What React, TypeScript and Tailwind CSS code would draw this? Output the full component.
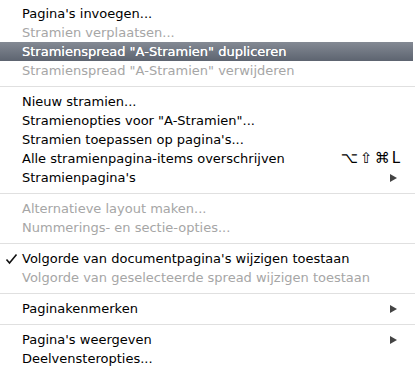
import React from 'react';

type Item = {
  label: string;
  disabled?: boolean;
  active?: boolean;
  checked?: boolean;
  shortcut?: string;
  submenu?: boolean;
};

const groups: Item[][] = [
  [
    { label: "Pagina's invoegen..." },
    { label: 'Stramien verplaatsen...', disabled: true },
    { label: 'Stramienspread "A-Stramien" dupliceren', active: true },
    { label: 'Stramienspread "A-Stramien" verwijderen', disabled: true },
  ],
  [
    { label: 'Nieuw stramien...' },
    { label: 'Stramienopties voor "A-Stramien"...' },
    { label: "Stramien toepassen op pagina's..." },
    { label: 'Alle stramienpagina-items overschrijven', shortcut: '⌥⇧⌘L' },
    { label: "Stramienpagina's", submenu: true },
  ],
  [
    { label: 'Alternatieve layout maken...', disabled: true },
    { label: 'Nummerings- en sectie-opties...', disabled: true },
  ],
  [
    { label: "Volgorde van documentpagina's wijzigen toestaan", checked: true },
    { label: 'Volgorde van geselecteerde spread wijzigen toestaan', disabled: true },
  ],
  [{ label: 'Paginakenmerken', submenu: true }],
  [
    { label: "Pagina's weergeven", submenu: true },
    { label: 'Deelvensteropties...' },
  ],
];

const Arrow = () => (
  <svg width="9" height="10" viewBox="0 0 9 10" className="shrink-0">
    <path d="M1 1 L8 5 L1 9 Z" fill="#444" />
  </svg>
);

const Check = () => (
  <svg width="13" height="12" viewBox="0 0 13 12">
    <path d="M1.5 6.5 L4.5 10 L11.5 1.5" fill="none" stroke="#111" strokeWidth="1.6" />
  </svg>
);

const Row: React.FC<{ item: Item }> = ({ item }) => {
  const color = item.active ? 'text-white' : item.disabled ? 'text-[#a6a6a6]' : 'text-black';
  return (
    <div
      className={`h-[19px] flex items-center mr-[2px] ${color} ${
        item.active ? 'bg-gradient-to-b from-[#848a94] to-[#5d6470]' : ''
      }`}
    >
      <div className="w-[22px] pl-[5px] flex items-center shrink-0">{item.checked && <Check />}</div>
      <span className={`flex-1 whitespace-nowrap ${item.active ? '[text-shadow:0_0_0.4px_#fff]' : ''}`}>
        {item.label}
      </span>
      {item.shortcut && <span className="mr-[11px] text-[15px] tracking-[2px]">{item.shortcut}</span>}
      {item.submenu && (
        <span className="mr-[15px] flex items-center">
          <Arrow />
        </span>
      )}
    </div>
  );
};

export default function App() {
  return (
    <div
      className="w-[415px] h-[372px] bg-white pt-[4px] text-[13px] leading-[19px] overflow-hidden"
      style={{ fontFamily: '"DejaVu Sans", sans-serif' }}
    >
      {groups.map((g, gi) => (
        <div key={gi}>
          {gi > 0 && (
            <div className="h-[12px] flex items-center">
              <div className="h-px w-full bg-[#e0e0e0]" />
            </div>
          )}
          {g.map((item, i) => (
            <Row key={i} item={item} />
          ))}
        </div>
      ))}
    </div>
  );
}
